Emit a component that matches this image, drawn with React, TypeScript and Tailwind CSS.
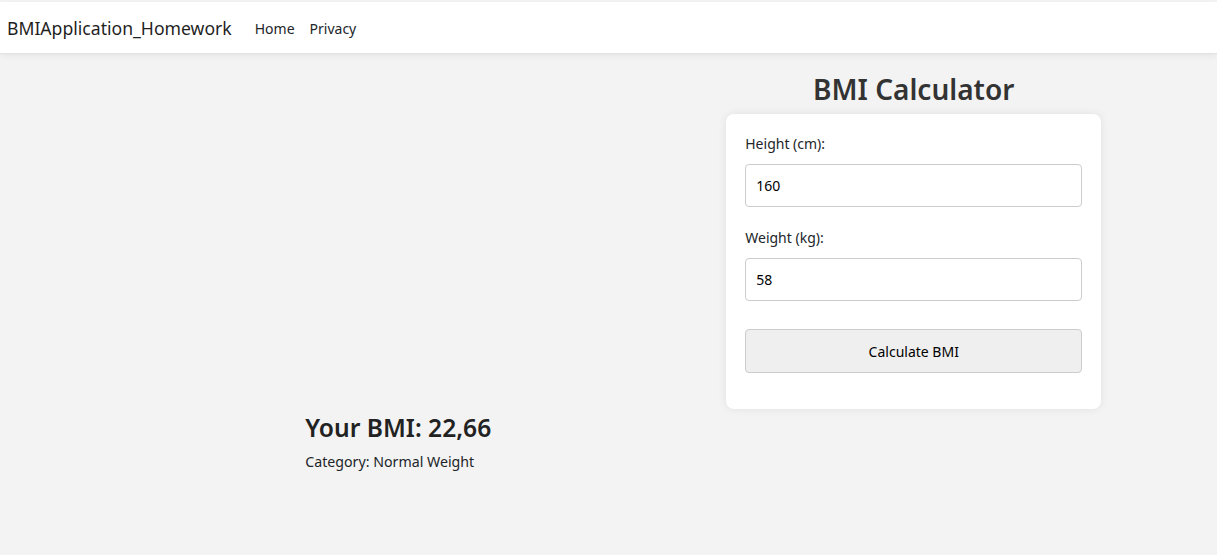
export default function App() {
  return (
    <div className="min-h-screen bg-[#f3f3f3] pt-[2px] text-[#212529]" style={{ fontFamily: '"Noto Sans", "Open Sans", sans-serif' }}>
      <header className="border-b border-[#e2e2e2] bg-white shadow-[0_2px_6px_rgba(0,0,0,0.06)]">
        <nav className="flex h-[51px] items-center px-[7px] pt-[2px]">
          <a className="mr-[23px] text-[17.6px] text-[#1f1f1f]">BMIApplication_Homework</a>
          <a className="mr-[15px] text-[14px] text-[#212529]">Home</a>
          <a className="text-[14px] text-[#212529]">Privacy</a>
        </nav>
      </header>

      <main className="grid grid-cols-2 items-end">
        <section className="self-end pl-[50%]">
          <h2 className="pl-[1px] text-[24.6px] font-semibold leading-[34px] text-[#222]">Your BMI: 22,66</h2>
          <p className="mt-[7px] pl-[1px] text-[14.2px] leading-[20px]">Category: Normal Weight</p>
        </section>

        <section className="flex flex-col items-center pb-[63px] pl-[2px] pt-[16px]">
          <h1 className="text-[28px] font-semibold leading-[38px] text-[#333]">BMI Calculator</h1>
          <div className="mt-[6px] w-[375px] rounded-[8px] bg-white px-[19px] pb-[36px] pt-[20px] shadow-[0_0_8px_rgba(0,0,0,0.08)]">
            <label className="block text-[14px] leading-[20px]">Height (cm):</label>
            <input
              defaultValue="160"
              className="mt-[10px] block h-[43px] w-full rounded-[4px] border border-[#ccc] bg-white px-[10px] text-[14px] text-black outline-none"
              style={{ fontFamily: "inherit" }}
            />
            <label className="mt-[21px] block text-[14px] leading-[20px]">Weight (kg):</label>
            <input
              defaultValue="58"
              className="mt-[10px] block h-[43px] w-full rounded-[4px] border border-[#ccc] bg-white px-[10px] text-[14px] text-black outline-none"
              style={{ fontFamily: "inherit" }}
            />
            <button className="mt-[28px] block h-[44px] w-full rounded-[4px] border border-[#ccc] bg-[#efefef] text-[14px] text-black">
              Calculate BMI
            </button>
          </div>
        </section>
      </main>
    </div>
  );
}
